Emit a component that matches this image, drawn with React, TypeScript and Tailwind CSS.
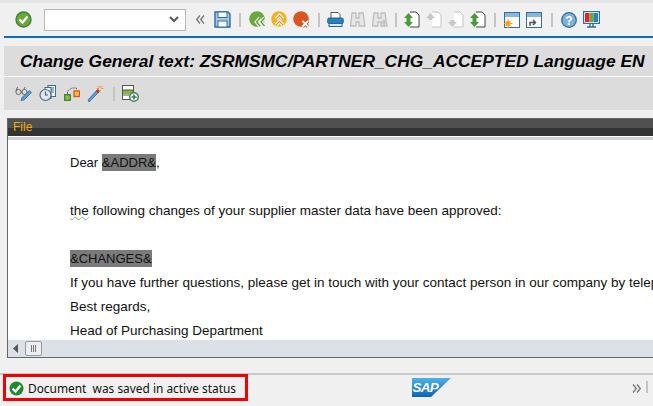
import React from "react";

const Sep: React.FC = () => <div className="w-[2px] h-[14px] bg-[#c4c4c4]"/>;

const Chevrons: React.FC<{ left?: boolean }> = ({left}) => (
    <svg width="9" height="9" viewBox="0 0 9 9">
        <path d={left ? "M4 0.5 L0.7 4.5 L4 8.5 M8 0.5 L4.7 4.5 L8 8.5" : "M1 0.5 L4.3 4.5 L1 8.5 M5 0.5 L8.3 4.5 L5 8.5"}
              fill="none" stroke="#777" strokeWidth="1.3"/>
    </svg>
);

const Okay = () => (
    <svg width="17" height="17" viewBox="0 0 17 17">
        <circle cx="8.5" cy="8.5" r="7.5" fill="#6aa83c" stroke="#3f7f3a" strokeWidth="1.4"/>
        <path d="M4.5 8.5 L7.5 11.5 L12.5 5.5" fill="none" stroke="#fff" strokeWidth="2.2"/>
    </svg>
);

const Save = () => (
    <svg width="17" height="17" viewBox="0 0 17 17">
        <path d="M1 1 H14 L16 3 V16 H1 Z" fill="#a9c6e0" stroke="#2d6ea3" strokeWidth="1.4"/>
        <rect x="4" y="1" width="9" height="5.5" fill="#fff" stroke="#2d6ea3"/>
        <rect x="4" y="10" width="9" height="6" fill="#fff" stroke="#2d6ea3"/>
    </svg>
);

const Round: React.FC<{ fill: string, kind: "back" | "up" | "x" }> = ({fill, kind}) => (
    <svg width="18" height="17" viewBox="0 0 18 17">
        <circle cx="8" cy="8" r="7.8" fill={fill}/>
        {kind === "back" && <>
            <path d="M11 7 L7.5 11 L11 15 M15.5 7 L12 11 L15.5 15" fill="none" stroke="#f0f0f0" strokeWidth="3.6"/>
            <path d="M11 7 L7.5 11 L11 15 M15.5 7 L12 11 L15.5 15" fill="none" stroke="#5d9a2f" strokeWidth="1.2"/>
        </>}
        {kind === "up" && <>
            <path d="M5 8 L8.5 4.5 L12 8 M5 14 L8.5 10.5 L12 14" fill="none" stroke="#fff" strokeWidth="3.4"/>
            <path d="M5 8 L8.5 4.5 L12 8 M5 14 L8.5 10.5 L12 14" fill="none" stroke="#ee8b2a" strokeWidth="1.1"/>
        </>}
        {kind === "x" && <>
            <path d="M9.5 10 L15 15.5 M15 10 L9.5 15.5" stroke="#b04a20" strokeWidth="3.4"/>
            <path d="M9.5 10 L15 15.5 M15 10 L9.5 15.5" stroke="#fff" strokeWidth="2"/>
        </>}
    </svg>
);

const Printer = () => (
    <svg width="17" height="17" viewBox="0 0 17 17">
        <path d="M4 7 V1.5 H11 L13 3.5 V7" fill="#fff" stroke="#555" strokeWidth="1"/>
        <rect x="0.7" y="7" width="15.6" height="5.5" rx="1.5" fill="#2d7fb8" stroke="#1c6a9f"/>
        <rect x="2" y="12.5" width="13" height="3" fill="#dfe6ec" stroke="#1c6a9f"/>
    </svg>
);

const Find: React.FC<{ plus?: boolean }> = ({plus}) => (
    <svg width="16" height="17" viewBox="0 0 16 17">
        <path d="M2 2 H6 V7 H9 V2 H13 L15 15 H9 V11 H6 V15 H0.5 Z" fill="#e6e6e6" stroke="#bdbdbd" strokeWidth="1.3"/>
        {plus && <path d="M9 11.5 H15 M12 8.5 V14.5" stroke="#c4c4c4" strokeWidth="2"/>}
    </svg>
);

const PageArrows: React.FC<{ up?: boolean, down?: boolean, active?: boolean }> = ({up, down, active}) => {
    const color = active ? "#4a9a3a" : "#c8c8c8";
    const edge = active ? "#444" : "#c4c4c4";
    return (
        <svg width="17" height="17" viewBox="0 0 17 17">
            <path d="M7 1 H13 L16 4 V16 H7" fill="#fff" stroke={edge}/>
            {up && <path d="M1 7 L5.5 2 L10 7 H7.5 V9 H3.5 V7 Z" fill={color}/>}
            {down && <path d="M1 11 L5.5 16 L10 11 H7.5 V9 H3.5 V11 Z" fill={color}/>}
        </svg>
    );
};

const Win: React.FC<{ kind: "sun" | "link" }> = ({kind}) => (
    <svg width="16" height="16" viewBox="0 0 16 16">
        <rect x="0.5" y="0.5" width="15" height="15" fill="#fff" stroke="#2d6ea3"/>
        <rect x="1" y="1" width="14" height="4" fill="#8db7d8"/>
        {kind === "sun"
            ? <>
                <circle cx="4" cy="11.5" r="2.6" fill="#f3a51e"/>
                <path d="M4 7 V16 M0 11.5 H8.5 M1 8.5 L7 14.5 M7 8.5 L1 14.5" stroke="#f3a51e"/>
            </>
            : <path d="M4 14 V10.5 H9 M7 8 L9.5 10.5 L7 13" fill="none" stroke="#555" strokeWidth="1.5"/>}
    </svg>
);

const Help = () => (
    <svg width="16" height="16" viewBox="0 0 16 16">
        <circle cx="8" cy="8" r="7.3" fill="#7fb0d8" stroke="#2d6ea3" strokeWidth="1.3"/>
        <text x="8" y="12.5" textAnchor="middle" fontSize="12" fontWeight="700" fill="#fff" fontFamily="Liberation Sans">?</text>
    </svg>
);

const Monitor = () => (
    <svg width="17" height="17" viewBox="0 0 17 17">
        <rect x="0.6" y="0.6" width="15.8" height="11.8" fill="#fff" stroke="#2d6ea3" strokeWidth="1.2"/>
        <rect x="2" y="2" width="4.5" height="9" fill="#e8202a"/>
        <rect x="6.5" y="2" width="4" height="9" fill="#6cab2f"/>
        <rect x="10.5" y="2" width="4.5" height="9" fill="#2d7fb8"/>
        <path d="M7 12.5 V15.5 M10 12.5 V15.5 M4 16 H13" stroke="#2d6ea3" strokeWidth="1.4"/>
    </svg>
);

const GlassesPen = () => (
    <svg width="17" height="17" viewBox="0 0 17 17">
        <circle cx="3.5" cy="7" r="2.6" fill="none" stroke="#666" strokeWidth="1"/>
        <circle cx="9.5" cy="7" r="2.6" fill="none" stroke="#666" strokeWidth="1"/>
        <path d="M6 7 H7 M1 6 L2.5 2 M9 4 L10 2" fill="none" stroke="#666"/>
        <path d="M6 15.5 L7 12.5 L14.5 5.5 L16.5 7.5 L9 15 Z" fill="#5a9bd0" stroke="#2d6ea3" strokeWidth="0.8"/>
    </svg>
);

const ClockDocs = () => (
    <svg width="17" height="17" viewBox="0 0 17 17">
        <rect x="9" y="0.5" width="7.5" height="11" fill="#fff" stroke="#2d6ea3"/>
        <path d="M10.5 3 H15 M10.5 5 H15 M10.5 7 H15" stroke="#2d6ea3"/>
        <rect x="6" y="2.5" width="6" height="11" fill="#fff" stroke="#2d6ea3"/>
        <circle cx="6.5" cy="10" r="5.5" fill="#dfe6ec" stroke="#666" strokeWidth="1.2"/>
        <path d="M6.5 6.5 V10 H9" fill="none" stroke="#2d6ea3" strokeWidth="1.2"/>
    </svg>
);

const Nodes = () => (
    <svg width="16" height="17" viewBox="0 0 16 17">
        <rect x="0.7" y="9.7" width="5.6" height="5.6" fill="#8bbf3f" stroke="#3f7f3a" strokeWidth="1.3"/>
        <rect x="10" y="6" width="5.5" height="5.5" fill="#f7c23c" stroke="#d9541e" strokeWidth="1.3"/>
        <path d="M3.5 9 V6 L8 3 L12.5 3 V5.5" fill="none" stroke="#666" strokeDasharray="2 1"/>
    </svg>
);

const Wand = () => (
    <svg width="17" height="17" viewBox="0 0 17 17">
        <path d="M1 15 L2 17 L12 7 L10 5 Z" fill="#5a9bd0" stroke="#2d6ea3" strokeWidth="0.8"/>
        <path d="M9 6 L11 4 L13 6 L11 8 Z" fill="#e8202a"/>
        <path d="M13 0.5 V3 M13 5 V7.5 M9.5 3.5 H12 M14 3.5 H16.5 M10.5 1 L12 2.5 M15.5 1 L14 2.5" stroke="#ee9b2a"/>
    </svg>
);

const RowAdd = () => (
    <svg width="17" height="17" viewBox="0 0 17 17">
        <rect x="0.5" y="0.5" width="11" height="14" fill="#fff" stroke="#555"/>
        <rect x="1" y="5" width="10" height="4" fill="#8bb13f"/>
        <path d="M1 5 H11 M1 10 H11" stroke="#555"/>
        <circle cx="12" cy="12" r="4.3" fill="#fff" stroke="#3f7f5a" strokeWidth="1.4"/>
        <path d="M9.5 12 H14.5 M12 9.5 V14.5" stroke="#3f7f5a" strokeWidth="1.6"/>
    </svg>
);

const Sap = () => (
    <svg width="39" height="19" viewBox="0 0 39 19">
        <defs>
            <linearGradient id="sapBlue" x1="0" y1="0" x2="0" y2="1">
                <stop offset="0" stopColor="#4fb3ea"/>
                <stop offset="1" stopColor="#0b63b3"/>
            </linearGradient>
        </defs>
        <path d="M0 0 H39 L19 19 H0 Z" fill="url(#sapBlue)"/>
        <text x="0.5" y="14" fontSize="13.5" fontWeight="700" fontStyle="italic" fill="#fff" fontFamily="Liberation Sans" letterSpacing="-0.8">SAP</text>
    </svg>
);

const StatusOk = () => (
    <svg width="15" height="15" viewBox="0 0 15 15">
        <circle cx="7.5" cy="7.5" r="7" fill="#1f8a2f"/>
        <path d="M3.5 7.5 L6.5 10.5 L11.5 4.5" fill="none" stroke="#fff" strokeWidth="2.4"/>
    </svg>
);

const App: React.FC = () => {
    return (
        <div className="w-[653px] h-[406px] overflow-hidden bg-[#f0f0f0] flex flex-col font-['Liberation_Sans',sans-serif]">
            <div className="h-[3px] bg-[#e4e4e4]"/>

            <div className="ml-1 h-[33px] flex items-center">
                <div className="w-[11px]"/>
                <Okay/>
                <div className="ml-[12px] w-[142px] h-[22px] bg-white border border-[#b8b8b8] flex items-center justify-end pr-[6px]">
                    <svg width="10" height="7" viewBox="0 0 10 7">
                        <path d="M1 1 L5 5 L9 1" fill="none" stroke="#555" strokeWidth="2"/>
                    </svg>
                </div>
                <div className="ml-[10px] flex"><Chevrons left/></div>
                <div className="ml-[9px] flex"><Save/></div>
                <div className="ml-[8px]"><Sep/></div>
                <div className="ml-[8px]"><Round fill="#6aa83c" kind="back"/></div>
                <div className="ml-[4px]"><Round fill="#f5b21e" kind="up"/></div>
                <div className="ml-[4px]"><Round fill="#d9571e" kind="x"/></div>
                <div className="ml-[7px]"><Sep/></div>
                <div className="ml-[7px]"><Printer/></div>
                <div className="ml-[6px]"><Find/></div>
                <div className="ml-[6px]"><Find plus/></div>
                <div className="ml-[7px]"><Sep/></div>
                <div className="ml-[6px]"><PageArrows up down active/></div>
                <div className="ml-[5px]"><PageArrows up/></div>
                <div className="ml-[5px]"><PageArrows down/></div>
                <div className="ml-[5px]"><PageArrows up down active/></div>
                <div className="ml-[8px]"><Sep/></div>
                <div className="ml-[8px]"><Win kind="sun"/></div>
                <div className="ml-[6px]"><Win kind="link"/></div>
                <div className="ml-[9px]"><Sep/></div>
                <div className="ml-[8px]"><Help/></div>
                <div className="ml-[6px]"><Monitor/></div>
            </div>
            <div className="ml-1 h-[2px] bg-[#0a6ebd]"/>

            <div className="ml-1 mt-[8px] h-[30px] bg-[#dcdcdc] flex items-center pl-[16px]">
                <h1 className="text-[17.4px] font-bold italic text-black whitespace-nowrap">
                    Change General text: ZSRMSMC/PARTNER_CHG_ACCEPTED Language EN
                </h1>
            </div>
            <div className="ml-1 h-px bg-white"/>
            <div className="ml-1 h-[33px] bg-[#dcdcdc] flex items-center pl-[11px]">
                <GlassesPen/>
                <div className="ml-[7px]"><ClockDocs/></div>
                <div className="ml-[8px]"><Nodes/></div>
                <div className="ml-[7px]"><Wand/></div>
                <div className="ml-[9px]"><Sep/></div>
                <div className="ml-[7px]"><RowAdd/></div>
            </div>

            <div className="ml-[7px] mt-[8px] h-[240px] border-l border-t border-b border-[#666] flex flex-col">
                <div className="h-[9px] bg-[#505050] relative">
                    <span className="absolute left-[5px] top-[1px] text-[12px] leading-[15px] text-[#f0ab00]">File</span>
                </div>
                <div className="h-[8px] bg-[#333]"/>
                <div className="h-px bg-white"/>
                <div className="h-[3px] bg-[#cfd2d6]"/>
                <div className="flex-1 bg-white overflow-hidden pl-[62px] pt-[11px] text-[13.5px] leading-[24px] text-[#111] whitespace-nowrap">
                    <p><span className="text-[13px]">Dear </span><span className="bg-[#7a7a7a] py-[1px] text-[13px]">&amp;ADDR&amp;</span>,</p>
                    <p className="h-[24px]"/>
                    <p><span className="underline decoration-wavy decoration-[#7fb56a] decoration-1">the</span> following changes of your supplier master data have been approved:</p>
                    <p className="h-[24px]"/>
                    <p><span className="bg-[#7a7a7a] py-[1px] text-[13px]">&amp;CHANGES&amp;</span></p>
                    <p>If you have further questions, please get in touch with your contact person in our company by telephone or by e-mail.</p>
                    <p>Best regards,</p>
                    <p>Head of Purchasing Department</p>
                </div>
                <div className="h-[17px] bg-[#dce0e7] flex items-center pl-[5px]">
                    <svg width="6" height="9" viewBox="0 0 6 9"><path d="M5 0 V9 L0 4.5 Z" fill="#555"/></svg>
                    <div className="ml-[6px] w-[17px] h-[15px] bg-[#eceef1] border border-[#9a9a9a] rounded-[2px] flex items-center justify-center gap-px">
                        <div className="w-px h-[7px] bg-[#777]"/>
                        <div className="w-px h-[7px] bg-[#777]"/>
                        <div className="w-px h-[7px] bg-[#777]"/>
                    </div>
                </div>
            </div>

            <div className="mt-[15px] h-[2px] bg-[#c8c8c8]"/>
            <div className="relative flex-1 flex items-center pb-[4px]">
                <div className="absolute left-[3px] top-[-1px] w-[245px] h-[27px] border-[3px] border-[#f00000]"/>
                <div className="ml-[9px] flex"><StatusOk/></div>
                <span className="ml-[4px] text-[11.9px] text-[#111] font-['Noto_Sans',sans-serif] whitespace-pre">Document  was saved in active status</span>
                <div className="absolute left-[412px] top-[3px]"><Sap/></div>
                <div className="absolute left-[632px] top-[9px] flex"><Chevrons/></div>
                <div className="absolute left-[646px] top-[6px] w-[2px] h-[12px] bg-[#c4c4c4]"/>
            </div>
        </div>
    );
};

export default App;
